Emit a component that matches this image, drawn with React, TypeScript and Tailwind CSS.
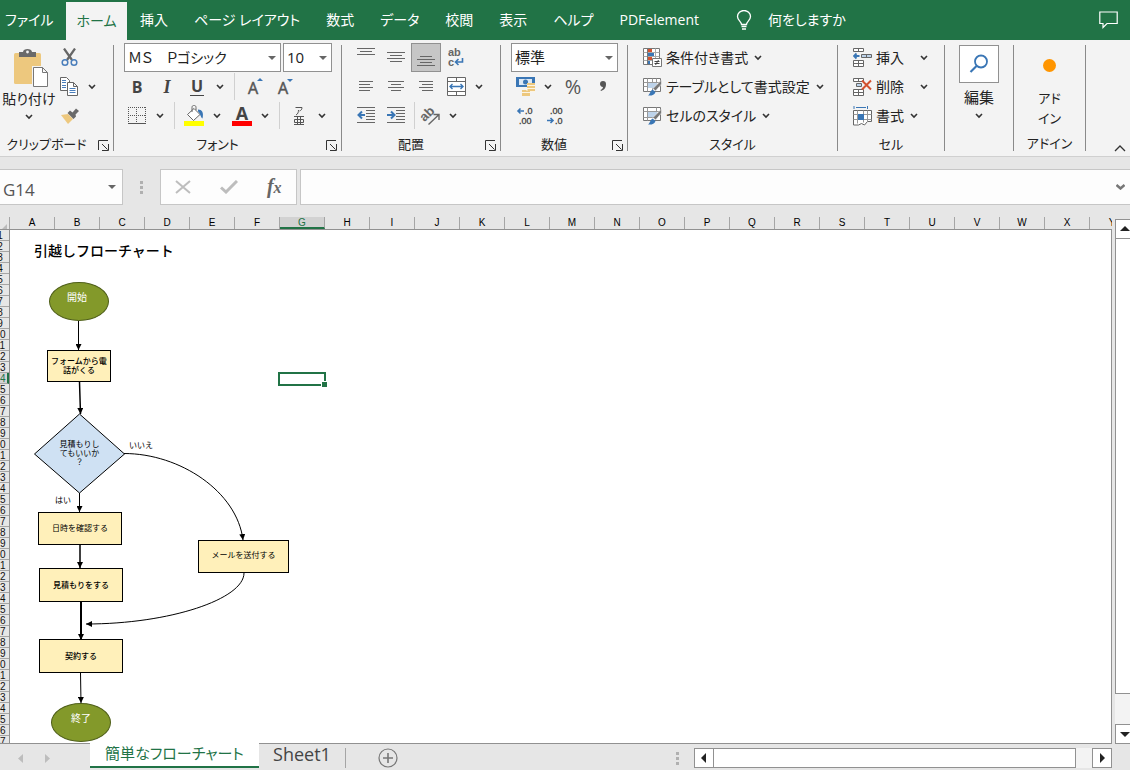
import React, { useState } from 'react';

const menuTabs = ['挿入', 'ページ レイアウト', '数式', 'データ', '校閲', '表示', 'ヘルプ', 'PDFelement'];
const columns = 'ABCDEFGHIJKLMNOPQRSTUVWXY'.split('');
const rows = Array.from({ length: 47 }, (_, i) => i + 1);

type Line = [number, number, number];

const Chevron = () => (
  <svg width="8" height="6" viewBox="0 0 8 6" fill="none" stroke="#333" strokeWidth="1.6">
    <path d="M1 1l3 3 3-3" />
  </svg>
);

const Caret = () => (
  <svg width="8" height="4" viewBox="0 0 8 4" fill="#666">
    <path d="M0 0h8l-4 4z" />
  </svg>
);

const ChevronButton = ({ label }: { label: string }) => (
  <button type="button" aria-label={label} className="flex h-[29px] w-4 items-center justify-center">
    <Chevron />
  </button>
);

const IconButton = ({ label, active = false, children }: { label: string; active?: boolean; children: React.ReactNode }) => (
  <button
    type="button"
    aria-label={label}
    className={
      active
        ? 'flex h-[29px] w-[30px] items-center justify-center border border-[#919191] bg-[#c6c6c6]'
        : 'flex h-[29px] w-[30px] items-center justify-center'
    }
  >
    {children}
  </button>
);

const Divider = () => <div className="h-[27px] w-px bg-[#d0d0d0]" />;

const DropDown = ({ label, value, className }: { label: string; value: string; className: string }) => (
  <div className={`relative ${className}`}>
    <select
      aria-label={label}
      defaultValue={value}
      className="h-[29px] w-full appearance-none border border-[#919191] bg-white pl-[3px] text-[#222]"
    >
      <option value={value}>{value}</option>
    </select>
    <div className="pointer-events-none absolute inset-y-0 right-[5px] flex items-center">
      <Caret />
    </div>
  </div>
);

const Launcher = ({ label }: { label: string }) => (
  <button type="button" aria-label={label} className="flex w-5 items-center justify-center">
    <svg width="11" height="11" viewBox="0 0 11 11" fill="none" stroke="#333">
      <path d="M.5 10V.5H10M4 4l5.5 5.5M10.5 4v6.5H4" />
    </svg>
  </button>
);

const Group = ({
  title,
  width,
  launcher = false,
  children
}: {
  title: string;
  width: string;
  launcher?: boolean;
  children?: React.ReactNode;
}) => (
  <section aria-label={title} className={`flex shrink-0 ${width}`}>
    <div className="flex min-w-0 flex-1 flex-col pt-[3px]">
      <div className="h-[87px]">{children}</div>
      <div className="mt-1 flex h-6 items-center text-[13px] text-[#222]">
        <div className="flex-1 text-center whitespace-nowrap">{title}</div>
        {launcher && <Launcher label={`${title}の設定`} />}
      </div>
    </div>
    <div className="my-[5px] w-px bg-[#8a8a8a]" />
  </section>
);

/* Horizontal strokes given as [x, y, width] */
const LinesIcon = ({ lines, children }: { lines: Line[]; children?: React.ReactNode }) => (
  <svg width="18" height="21" viewBox="0 0 18 21" fill="#666">
    {lines.map(([x, y, w], i) => (
      <rect key={i} x={x} y={y} width={w} height="1" />
    ))}
    {children}
  </svg>
);

const CommandRow = ({ icon, text, wide = false }: { icon: React.ReactNode; text: string; wide?: boolean }) => (
  <button type="button" className="flex h-[29px] items-center text-sm whitespace-nowrap text-[#222]">
    <span className="mr-1 flex w-[19px] justify-center">{icon}</span>
    {text}
    <span className={wide ? 'ml-4' : 'ml-1.5'}>
      <Chevron />
    </span>
  </button>
);

const ClipboardIcon = () => (
  <svg width="35" height="39" viewBox="0 0 35 39">
    <rect x="0" y="4" width="27" height="31" rx="1.5" fill="#edc87e" />
    <path d="M5 8V3h4c0-4 9-4 9 0h4v5z" fill="#6a6a6a" />
    <circle cx="13.5" cy="3" r="1.4" fill="#f3f3f3" />
    <path d="M19.5 18.5h9l5 5v14h-14z" fill="#fff" stroke="#f3f3f3" strokeWidth="3" />
    <path d="M19.5 18.5h9l5 5v14h-14zM28.5 18.5v5h5" fill="#fff" stroke="#777" />
  </svg>
);

const CutIcon = () => (
  <svg width="17" height="19" viewBox="0 0 17 19" fill="none">
    <path d="M3 0.5l8 11.5M14 0.5L6 12" stroke="#666" strokeWidth="2.2" />
    <circle cx="4" cy="14.5" r="2.8" stroke="#4a7ebb" strokeWidth="1.5" />
    <circle cx="13" cy="14.5" r="2.8" stroke="#4a7ebb" strokeWidth="1.5" />
  </svg>
);

const CopyIcon = () => (
  <svg width="18" height="19" viewBox="0 0 18 19" fill="#fff" stroke="#666">
    <path d="M.5 .5h6l3 3v10h-9z" />
    <path d="M2 3.5h4M2 5.5h4M2 8.5h4M2 10.5h4" stroke="#4a7ebb" />
    <path d="M7.5 5.5h6l4 4v9h-10zM13.5 5.5v4h4" />
    <path d="M9.5 11.5h6M9.5 13.5h6M9.5 15.5h6" stroke="#4a7ebb" />
  </svg>
);

const BrushIcon = () => (
  <svg width="18" height="16" viewBox="0 0 18 16">
    <path d="M0 7l7-1 5 5-5 5z" fill="#edc87e" />
    <path d="M6.5 5l2.5-2.5 2.5 2L15 .5l3 2.5-3.5 3.5.5 2-2.5 2.5z" fill="#6a6a6a" />
  </svg>
);

const BorderIcon = () => (
  <svg width="18" height="18" viewBox="0 0 18 18" fill="none" stroke="#555">
    <path d="M0 .5h18M0 8.5h18M.5 0v16M8.5 0v16M17.5 0v16" strokeDasharray="1 1" />
    <path d="M0 16.5h18" />
  </svg>
);

const FillIcon = () => (
  <svg width="20" height="21" viewBox="0 0 20 21">
    <path d="M3.5 9.5l6.5-6 6 6-6.5 6z" fill="#fff" stroke="#666" />
    <path d="M8 7V2.5c0-3 4-3 4 0V5" fill="none" stroke="#666" />
    <path d="M14 4.5c4 0 6 3 4.5 9-2-1-2-5-4.5-7z" fill="#3a76b5" />
    <path d="M0 16h20v5H0z" fill="#ff0" />
  </svg>
);

const FontSizeIcon = ({ down = false }: { down?: boolean }) => (
  <svg width="16" height="18" viewBox="0 0 16 18" className="overflow-visible">
    <text x="0" y="16" fontSize="16" fill="#555" stroke="#555" strokeWidth=".5">
      A
    </text>
    <path d={down ? 'M9 1h6l-3 3z' : 'M9 3h6l-3-3z'} fill="#3a76b5" />
  </svg>
);

const RubyIcon = () => (
  <svg width="12" height="20" viewBox="0 0 12 20" fill="none" stroke="#555">
    <path d="M2.5 1.5H9c0 2-1 3-2.5 3.5M5.5 4c0 2-.5 4-2.5 5M1 10.5h10M4.5 10.5v8M7.5 10.5v8M1.5 13.5h9v3h-9zM1 18.5h10" />
  </svg>
);

const WrapIcon = () => (
  <svg width="18" height="19" viewBox="0 0 18 19" className="overflow-visible font-['Liberation_Sans',sans-serif]">
    <text x="1" y="8" fontSize="11" fontWeight="600" fill="#666">
      ab
    </text>
    <text x="1" y="18" fontSize="11" fontWeight="600" fill="#666">
      c
    </text>
    <path d="M15.5 10v4H9M11.5 11l-3 3 3 3" fill="none" stroke="#3a76b5" strokeWidth="1.6" />
  </svg>
);

const MergeIcon = () => (
  <svg width="19" height="19" viewBox="0 0 19 19" fill="#fff" stroke="#666">
    <path d="M.5 .5h18v18H.5zM9.5 .5v4M9.5 14.5v4M.5 4.5h18M.5 14.5h18" />
    <path d="M3 9.5h13M5.5 7L3 9.5 5.5 12M13.5 7L16 9.5 13.5 12" fill="none" stroke="#3a76b5" strokeWidth="1.4" />
  </svg>
);

const OrientationIcon = () => (
  <svg width="19" height="18" viewBox="0 0 19 18" className="overflow-visible font-['Liberation_Sans',sans-serif]">
    <text x="1" y="13" fontSize="13" fontWeight="600" fill="#666" transform="rotate(-45 5 11)">
      ab
    </text>
    <path d="M7.5 17.5L17.500 8M12.5 7.5h5.500V13" fill="none" stroke="#666" strokeWidth="1.4" />
  </svg>
);

const CurrencyIcon = () => (
  <svg width="19" height="19" viewBox="0 0 19 19">
    <path d="M0 0h19v10H0z" fill="#3a76b5" />
    <path d="M3 2h13v6H3z" fill="#dce8f5" />
    <circle cx="9.5" cy="5" r="2.5" fill="#3a76b5" />
    <path d="M11 6h8v9h-5v4H6v-6h5z" fill="#edc87e" />
    <path d="M11 8.5h8M11 11.5h8M6 15.5h8M14 14.5h5M11 12v2" stroke="#fff" strokeWidth=".8" />
  </svg>
);

const DecimalIcon = ({ add = false }: { add?: boolean }) => (
  <svg
    width="18"
    height="18"
    viewBox="0 0 18 18"
    fontSize="9"
    fill="#444"
    stroke="#444"
    strokeWidth=".3"
    className="overflow-visible font-['Liberation_Sans',sans-serif]"
  >
    <text x={add ? 9 : 4} y="7">
      {add ? '.0' : '.00'}
    </text>
    <text x={add ? 3 : 9} y="17">
      {add ? '.00' : '.0'}
    </text>
    {add ? (
      <path d="M8 4H2M4.5 1.5L2 4l2.5 2.5" fill="none" stroke="#3a76b5" strokeWidth="1.6" />
    ) : (
      <path d="M1 13.5h6M4.5 11L7 13.5 4.5 16" fill="none" stroke="#3a76b5" strokeWidth="1.6" />
    )}
  </svg>
);

const ConditionalIcon = () => (
  <svg width="19" height="19" viewBox="0 0 19 19" fill="#fff" stroke="#777">
    <path d="M.5 .5h16v16H.5z" />
    <path d="M.5 4.5h16M.5 8.5h16M.5 12.5h16M12.5 .5v16" stroke="#aaa" />
    <path d="M4.5 .5v16" />
    <path d="M5 1h4v3H5zM5 9h4v3H5z" fill="#d35230" stroke="none" />
    <path d="M5 5h6v3H5zM5 13h2v3H5z" fill="#3a76b5" stroke="none" />
    <path d="M9.5 10.5h9v8h-9z" />
    <path d="M11.5 13.5h5M11.5 15.5h5M15.5 12l-3 5" stroke="#444" />
  </svg>
);

const TableStyleIcon = ({ cell = false }: { cell?: boolean }) => (
  <svg width="19" height="18" viewBox="0 0 19 18" fill="#fff" stroke="#777">
    <path d="M.5 .5h17v13H.5z" />
    {cell ? (
      <path d="M4.5 .5v13M.5 4.5h17M.5 10.5h12M13.5 .5v8" stroke="#999" />
    ) : (
      <path d="M.5 4.5h17M.5 8.5h17M4.5 .5v13M9.5 .5v13M13.5 .5v8" stroke="#999" />
    )}
    <path d="M5 5h9v5H5z" fill="#bdd3ea" stroke="none" />
    <path d="M18.5 2v4l-6 7-2.5-2.5z" fill="#777" stroke="#f3f3f3" strokeWidth=".6" />
    <path d="M9.5 11.5l3 2.500c-1 3-4 4-7.5 3.5 2-1 2-4.5 4.500-6z" fill="#3a76b5" stroke="none" />
  </svg>
);

const InsertIcon = () => (
  <svg width="19" height="19" viewBox="0 0 19 19" fill="#fff" stroke="#666">
    <path d="M.5 .5h10v3H.5zM5.5 .5v3M.5 12.5h10v6H.5zM5.5 12.5v6M.5 15.5h10" />
    <path d="M8.5 6.5h10v3h-10zM13.5 6.5v3" fill="#bdd3ea" />
    <path d="M6.5 8H1M3.5 5.5L1 8l2.5 2.5" fill="none" stroke="#3a76b5" strokeWidth="1.8" />
  </svg>
);

const DeleteIcon = () => (
  <svg width="19" height="18" viewBox="0 0 19 18" fill="#fff" stroke="#666">
    <path d="M.5 .5h10v3H.5zM5.5 .5v3M.5 11.5h10v6H.5zM5.5 11.5v6M.5 14.5h10" />
    <path d="M3.5 5.5h5v3h-5z" fill="#bdd3ea" />
    <path d="M9 2.5l9 9M18 2.5l-9 9" stroke="#d35230" strokeWidth="2" />
  </svg>
);

const FormatIcon = () => (
  <svg width="19" height="20" viewBox="0 0 19 20" fill="#fff" stroke="#666">
    <path d="M1 0v3M14.5 0v3M3 1.5h10" stroke="#3a76b5" />
    <path d="M.5 4.5h18v11h-4l-3 3.5-3-1.5-3 1.5h-5z" />
    <path d="M.5 8.5h18M.5 13.5h18M4.5 4.5v13M10.5 4.5v12M14.5 4.5v11" stroke="#999" />
    <path d="M5 8h6v6H5z" fill="#3a76b5" stroke="none" />
  </svg>
);

const Grip = () => (
  <div className="flex flex-col gap-0.5">
    <span className="size-[3px] bg-[#b0b0b0]" />
    <span className="size-[3px] bg-[#b0b0b0]" />
    <span className="size-[3px] bg-[#b0b0b0]" />
  </div>
);

const ScrollButton = ({ label, path }: { label: string; path: string }) => (
  <button type="button" aria-label={label} className="flex size-5 shrink-0 items-center justify-center border border-[#919191] bg-white">
    <svg width="10" height="10" viewBox="0 0 10 10" fill="#222">
      <path d={path} />
    </svg>
  </button>
);

const MenuBar = () => (
  <nav className="flex h-10 shrink-0 items-center bg-[#217346] text-sm whitespace-nowrap text-white">
    <button type="button" className="w-[66px] pl-[5px] text-left">ファイル</button>
    <button type="button" className="mt-0.5 h-[38px] w-[61px] bg-[#f3f3f3] text-[#217346]">ホーム</button>
    {menuTabs.map((tab) => (
      <button key={tab} type="button" className="px-[13px]">
        {tab}
      </button>
    ))}
    <button type="button" className="ml-6 flex items-center gap-4">
      <svg width="16" height="20" viewBox="0 0 16 20" fill="none" stroke="#fff" strokeWidth="1.3">
        <path d="M5.5 14.5c0-3-4-4-4-8a6.5 6 0 0 1 13 0c0 4-4 5-4 8zM5.5 16.5h5M6 19h4" />
      </svg>
      何をしますか
    </button>
    <button type="button" aria-label="コメント" className="mr-3 ml-auto">
      <svg width="19" height="18" viewBox="0 0 19 18" fill="none" stroke="#fff" strokeWidth="1.2">
        <path d="M.8 1h17.4v11.500H8l-4 4v-4H.8z" />
      </svg>
    </button>
  </nav>
);

const Ribbon = () => (
  <div className="flex h-[117px] shrink-0 border-b border-[#d0d0d0] bg-[#f3f3f3]">
    <Group title="クリップボード" width="w-[114px]" launcher>
      <div className="flex">
        <button type="button" className="flex w-[58px] flex-col items-center pt-1.5 text-sm leading-[22px] whitespace-nowrap text-[#222]">
          <span className="pl-1">
            <ClipboardIcon />
          </span>
          <span>貼り付け</span>
          <span className="pt-1">
            <Chevron />
          </span>
        </button>
        <div>
          <button type="button" aria-label="切り取り" className="flex h-[29px] w-[22px] items-center justify-center">
            <CutIcon />
          </button>
          <div className="flex">
            <button type="button" aria-label="コピー" className="flex h-[29px] w-[22px] items-center justify-center">
              <CopyIcon />
            </button>
            <div className="ml-1">
              <ChevronButton label="コピーのオプション" />
            </div>
          </div>
          <button type="button" aria-label="書式のコピー" className="flex h-[29px] w-[24px] items-center justify-center">
            <BrushIcon />
          </button>
        </div>
      </div>
    </Group>

    <Group title="フォント" width="w-[228px]" launcher>
      <div className="flex gap-0.5 pl-2.5">
        <DropDown label="フォント名" value="ＭＳ　Ｐゴシック" className="w-[157px] text-sm" />
        <DropDown label="フォント サイズ" value="10" className="w-[49px] text-[15px]" />
      </div>
      <div className="flex items-center pl-2 text-base text-[#444]">
        <IconButton label="太字"><b>B</b></IconButton>
        <IconButton label="斜体"><b className="font-['Liberation_Serif',serif] text-lg italic">I</b></IconButton>
        <IconButton label="下線"><b className="border-b border-[#444] px-px leading-[18px]">U</b></IconButton>
        <ChevronButton label="下線のオプション" />
        <div className="px-1.5">
          <Divider />
        </div>
        <IconButton label="フォント サイズの拡大"><FontSizeIcon /></IconButton>
        <IconButton label="フォント サイズの縮小"><FontSizeIcon down /></IconButton>
      </div>
      <div className="flex items-center pl-2">
        <IconButton label="罫線"><BorderIcon /></IconButton>
        <ChevronButton label="罫線のオプション" />
        <div className="pr-1 pl-1.5">
          <Divider />
        </div>
        <IconButton label="塗りつぶしの色"><FillIcon /></IconButton>
        <ChevronButton label="塗りつぶしのオプション" />
        <div className="ml-0.5 flex items-center">
          <IconButton label="フォントの色">
            <span className="w-5 border-b-[5px] border-[#f00] text-center text-lg leading-4 font-bold text-[#444]">A</span>
          </IconButton>
          <ChevronButton label="フォントの色のオプション" />
        </div>
        <div className="pr-1 pl-1.5">
          <Divider />
        </div>
        <IconButton label="ふりがな"><RubyIcon /></IconButton>
        <ChevronButton label="ふりがなのオプション" />
      </div>
    </Group>

    <Group title="配置" width="w-[159px]" launcher>
      <div className="flex pl-[9px]">
        <IconButton label="上揃え"><LinesIcon lines={[[0, 1, 18], [3, 4, 12], [0, 7, 18]]} /></IconButton>
        <IconButton label="上下中央揃え"><LinesIcon lines={[[0, 5, 18], [3, 8, 12], [0, 11, 18], [3, 14, 12]]} /></IconButton>
        <IconButton label="下揃え" active><LinesIcon lines={[[3, 9, 12], [0, 12, 18], [3, 15, 12], [0, 18, 18]]} /></IconButton>
        <IconButton label="折り返して全体を表示する"><WrapIcon /></IconButton>
      </div>
      <div className="flex pl-[9px]">
        <IconButton label="左揃え"><LinesIcon lines={[[2, 5, 14], [2, 8, 11], [2, 11, 14], [2, 14, 11]]} /></IconButton>
        <IconButton label="中央揃え"><LinesIcon lines={[[1, 5, 16], [4, 8, 10], [1, 11, 16], [4, 14, 10]]} /></IconButton>
        <IconButton label="右揃え"><LinesIcon lines={[[2, 5, 14], [5, 8, 11], [2, 11, 14], [5, 14, 11]]} /></IconButton>
        <IconButton label="セルを結合して中央揃え"><MergeIcon /></IconButton>
        <ChevronButton label="結合のオプション" />
      </div>
      <div className="flex items-center pl-[9px]">
        <IconButton label="インデントを減らす">
          <LinesIcon lines={[[0, 2, 18], [9, 5, 9], [9, 8, 9], [9, 11, 9], [9, 14, 9], [0, 17, 18]]}>
            <path d="M8 10H2M5 6.5L1.5 10 5 13.5" fill="none" stroke="#3a76b5" strokeWidth="2" />
          </LinesIcon>
        </IconButton>
        <IconButton label="インデントを増やす">
          <LinesIcon lines={[[0, 2, 18], [9, 5, 9], [9, 8, 9], [9, 11, 9], [9, 14, 9], [0, 17, 18]]}>
            <path d="M0 10h6M4 6.5L7.5 10 4 13.5" fill="none" stroke="#3a76b5" strokeWidth="2" />
          </LinesIcon>
        </IconButton>
        <div className="pl-[3px]">
          <Divider />
        </div>
        <IconButton label="方向"><OrientationIcon /></IconButton>
        <ChevronButton label="方向のオプション" />
      </div>
    </Group>

    <Group title="数値" width="w-[127px]" launcher>
      <div className="pl-2.5">
        <DropDown label="表示形式" value="標準" className="w-[107px] text-[15px]" />
      </div>
      <div className="flex pl-[9px] text-xl text-[#555]">
        <IconButton label="通貨表示形式"><CurrencyIcon /></IconButton>
        <ChevronButton label="通貨のオプション" />
        <div className="ml-0.5 flex">
          <IconButton label="パーセント スタイル">%</IconButton>
          <IconButton label="桁区切りスタイル">
            <svg width="8" height="11" viewBox="0 0 8 11" fill="#555">
              <path d="M1 3a3 3 0 0 1 6 0c0 4-2 6-5 7l-.5-1C3 8.5 4 7 4 6 2 6 1 4.500 1 3z" />
            </svg>
          </IconButton>
        </div>
      </div>
      <div className="flex pl-[9px]">
        <IconButton label="小数点以下の表示桁数を増やす"><DecimalIcon add /></IconButton>
        <IconButton label="小数点以下の表示桁数を減らす"><DecimalIcon /></IconButton>
      </div>
    </Group>

    <Group title="スタイル" width="w-[210px]">
      <div className="pl-[15px]">
        <CommandRow icon={<ConditionalIcon />} text="条件付き書式" />
        <CommandRow icon={<TableStyleIcon />} text="テーブルとして書式設定" />
        <CommandRow icon={<TableStyleIcon cell />} text="セルのスタイル" />
      </div>
    </Group>

    <Group title="セル" width="w-[107px]">
      <div className="pl-[15px]">
        <CommandRow icon={<InsertIcon />} text="挿入" wide />
        <CommandRow icon={<DeleteIcon />} text="削除" wide />
        <CommandRow icon={<FormatIcon />} text="書式" />
      </div>
    </Group>

    <Group title="" width="w-[69px]">
      <button type="button" className="flex w-full flex-col items-center pt-0.5 text-[15px] leading-7 text-[#222]">
        <span className="flex h-[38px] w-10 items-center justify-center border border-[#919191] bg-white">
          <svg width="20" height="20" viewBox="0 0 20 20" fill="none" stroke="#3a76b5">
            <circle cx="12" cy="7.5" r="6" strokeWidth="1.8" />
            <path d="M7.5 12l-6 6" strokeWidth="2.2" />
          </svg>
        </span>
        <span>編集</span>
        <span className="pt-0.5">
          <Chevron />
        </span>
      </button>
    </Group>

    <Group title="アドイン" width="w-[72px]">
      <button type="button" className="flex w-full flex-col items-center pt-4 text-[13px] leading-5 text-[#222]">
        <span className="mb-4 size-[13px] rounded-full bg-[#ff9500]" />
        <span>アド</span>
        <span>イン</span>
      </button>
    </Group>

    <button type="button" aria-label="リボンを折りたたむ" className="mt-auto mr-1 mb-1 ml-auto">
      <svg width="12" height="8" viewBox="0 0 12 8" fill="none" stroke="#333" strokeWidth="1.3">
        <path d="M1 7l5-5 5 5" />
      </svg>
    </button>
  </div>
);

const FormulaBar = ({ cell }: { cell: string }) => {
  const [formula, setFormula] = useState('');
  return (
    <div className="flex h-12 shrink-0 items-end">
      <div className="relative w-[123px]">
        <input
          aria-label="名前ボックス"
          defaultValue={cell}
          className="h-9 w-full border border-l-0 border-[#c6c6c6] bg-[#fdfdfd] pt-1 pl-[3px] text-[17px] text-[#555]"
        />
        <div className="pointer-events-none absolute inset-y-0 right-[7px] flex items-center">
          <Caret />
        </div>
      </div>
      <div className="flex h-9 w-[37px] items-center justify-center">
        <Grip />
      </div>
      <div className="flex h-9 w-[137px] items-center justify-around border border-[#c6c6c6] bg-[#fdfdfd]">
        <button type="button" aria-label="キャンセル">
          <svg width="16" height="14" viewBox="0 0 16 14" fill="none" stroke="#bdbdbd" strokeWidth="2">
            <path d="M1 1l14 12M15 1L1 13" />
          </svg>
        </button>
        <button type="button" aria-label="入力">
          <svg width="18" height="14" viewBox="0 0 18 14" fill="none" stroke="#bdbdbd" strokeWidth="3">
            <path d="M1 7.5L6 12 17 1" />
          </svg>
        </button>
        <button type="button" aria-label="関数の挿入" className="font-['Liberation_Serif',serif] text-xl leading-6 font-bold text-[#666] italic">
          f<span className="text-base">x</span>
        </button>
      </div>
      <div className="relative ml-[3px] flex-1">
        <input
          aria-label="数式バー"
          value={formula}
          onChange={(e) => setFormula(e.target.value)}
          className="h-9 w-full border border-r-0 border-[#c6c6c6] bg-[#fdfdfd] px-2 text-base"
        />
        <div className="pointer-events-none absolute inset-y-0 right-[5px] flex items-center">
          <svg width="9" height="6" viewBox="0 0 9 6" fill="none" stroke="#777" strokeWidth="2.5">
            <path d="M.5 1l4 3.5 4-3.5" />
          </svg>
        </div>
      </div>
    </div>
  );
};

const Node = ({ className, children }: { className: string; children: React.ReactNode }) => (
  <div className={`absolute flex items-center justify-center text-center whitespace-nowrap ${className}`}>{children}</div>
);

/* Shapes float over the cells, so they sit at free canvas positions */
const Flowchart = () => (
  <div className="absolute inset-0 font-['Noto_Sans_CJK_JP',sans-serif] text-[8px] leading-[9px] text-black [font-feature-settings:normal]">
    <h1 className="absolute top-[10px] left-6 text-[14px] leading-5 font-medium whitespace-nowrap">引越しフローチャート</h1>
    <svg width="300" height="514" viewBox="0 0 300 514" className="absolute top-0 left-0" fill="none" stroke="#000">
      <defs>
        <marker id="arrow" viewBox="0 0 6 6" refX="6" refY="3" markerWidth="6" markerHeight="6" markerUnits="userSpaceOnUse" orient="auto">
          <path d="M0 0l6 3-6 3z" fill="#000" stroke="none" />
        </marker>
      </defs>
      <path d="M69.5 184l45 40-45 39-45-39z" fill="#cfe1f3" />
      <path d="M68.5 91v29" markerEnd="url(#arrow)" />
      <path d="M69.5 152l1 32" strokeWidth="1.5" markerEnd="url(#arrow)" />
      <path d="M69.5 263v19" markerEnd="url(#arrow)" />
      <path d="M70 315v23" strokeWidth="1.5" markerEnd="url(#arrow)" />
      <path d="M71 372v38" strokeWidth="2" markerEnd="url(#arrow)" />
      <path d="M70.5 443l.5 30" markerEnd="url(#arrow)" />
      <path d="M114 223.5c56 0 113 38 119 86.5" markerEnd="url(#arrow)" />
      <path d="M234 343c0 26-74 51-158 51" markerEnd="url(#arrow)" />
    </svg>
    <Node className="top-[52px] left-[39px] h-[39px] w-[60px] rounded-[50%] border border-[#4f5f1a] bg-[#83992a] pr-1 pb-2.5 text-[10px] text-white">開始</Node>
    <Node className="top-[120px] left-[37px] h-8 w-16 border border-black bg-[#fff0ba] pb-0.5 font-medium">
      フォームから電
      <br />
      話がくる
    </Node>
    <Node className="top-[184px] left-6 h-[78px] w-[91px] pb-0.5">
      見積もりし
      <br />
      てもいいか
      <br />？
    </Node>
    <Node className="top-[210px] left-[119px]">いいえ</Node>
    <Node className="top-[265px] left-[45px]">はい</Node>
    <Node className="top-[282px] left-7 h-[33px] w-[84px] border border-black bg-[#fff0ba] pb-0.5">日時を確認する</Node>
    <Node className="top-[310px] left-[188px] h-[33px] w-[91px] border border-black bg-[#fff0ba] pb-1">メールを送付する</Node>
    <Node className="top-[338px] left-[29px] h-[34px] w-[84px] border border-black bg-[#fff0ba] pb-0.5 font-medium">見積もりをする</Node>
    <Node className="top-[409px] left-[29px] h-[34px] w-[84px] border border-black bg-[#fff0ba] pb-0.5 font-medium">契約する</Node>
    <Node className="top-[473px] left-[41px] h-[39px] w-[60px] rounded-[50%] border border-[#4f5f1a] bg-[#83992a] pb-2.5 text-[10px] text-white">終了</Node>
  </div>
);

const Sheet = () => (
  <div className="flex min-h-0 flex-1 flex-col overflow-hidden border-b border-[#919191]">
    <div className="flex h-[13px] shrink-0 overflow-hidden border-b border-[#919191] font-['Liberation_Sans',sans-serif] text-[10px] leading-3 text-black">
      <div className="flex w-[10px] shrink-0 items-end justify-center border-r border-[#a5a5a5]">
        <svg width="5" height="5" viewBox="0 0 5 5" fill="#bbb">
          <path d="M5 0v5H0z" />
        </svg>
      </div>
      {columns.map((name) => (
        <div
          key={name}
          className={
            name === 'G'
              ? 'w-[45px] shrink-0 border-r border-b-2 border-r-[#a5a5a5] border-b-[#217346] bg-[#d2d2d2] text-center text-[#217346]'
              : 'w-[45px] shrink-0 border-r border-[#a5a5a5] text-center'
          }
        >
          {name}
        </div>
      ))}
    </div>
    <div className="flex min-h-0 flex-1 overflow-hidden border-r border-[#919191]">
      <div className="w-[10px] shrink-0 border-r border-[#919191] font-['Liberation_Sans',sans-serif] text-[10px] leading-3 text-[#111]">
        {rows.map((n) => (
          <div
            key={n}
            className={
              n === 14
                ? 'flex h-[11px] justify-end overflow-hidden border-r-2 border-b border-r-[#217346] border-b-[#a5a5a5] bg-[#d2d2d2] text-[#217346]'
                : 'flex h-[11px] justify-end overflow-hidden border-b border-[#a5a5a5] pr-0.5'
            }
          >
            <span className="w-[14px] shrink-0 text-center">{n}</span>
          </div>
        ))}
      </div>
      <div className="relative flex-1 overflow-hidden bg-white">
        <Flowchart />
        <div className="absolute top-[142px] left-[268px] h-[14px] w-12 border-2 border-[#217346]">
          <span className="absolute -right-[3px] -bottom-[3px] size-[6px] border-t border-l border-white bg-[#217346]" />
        </div>
      </div>
    </div>
  </div>
);

const SheetTabs = () => (
  <div className="flex h-[26px] shrink-0 items-start text-[#444]">
    <div className="flex h-7 w-[90px] items-center gap-[22px] pl-[18px]">
      <svg width="5" height="9" viewBox="0 0 5 9" fill="#bdbdbd">
        <path d="M5 0v9L0 4.5z" />
      </svg>
      <svg width="5" height="9" viewBox="0 0 5 9" fill="#bdbdbd">
        <path d="M0 0v9l5-4.5z" />
      </svg>
    </div>
    <button type="button" className="-mt-px h-[25px] w-[169px] border-b-2 border-[#217346] bg-white pb-1 text-[15px] leading-[18px] whitespace-nowrap text-[#217346]">
      簡単なフローチャート
    </button>
    <button type="button" className="h-6 w-[86px] pb-1 text-lg leading-5">Sheet1</button>
    <div className="mt-1 h-5 w-px bg-[#a5a5a5]" />
    <button type="button" aria-label="新しいシート" className="mt-1 ml-8">
      <svg width="20" height="20" viewBox="0 0 20 20" fill="none" stroke="#777" strokeWidth="1.2">
        <circle cx="10" cy="10" r="9" />
        <path d="M10 5v10M5 10h10" strokeWidth="1.6" />
      </svg>
    </button>
    <div className="mt-2 ml-auto">
      <Grip />
    </div>
    <div className="mt-1 mr-[18px] ml-[15px] flex h-5 w-[37%] bg-[#f3f3f3]">
      <ScrollButton label="左へスクロール" path="M7 0v10L2 5z" />
      <div className="-ml-px flex-1 border border-[#919191] bg-white" />
      <div className="w-4" />
      <ScrollButton label="右へスクロール" path="M3 0v10l5-5z" />
    </div>
  </div>
);

const App = () => {
  return (
    <div className="flex h-screen flex-col overflow-hidden bg-[#e6e6e6] font-['Open_Sans','Noto_Sans_CJK_JP',sans-serif] [font-feature-settings:'palt']">
      <MenuBar />
      <Ribbon />
      <FormulaBar cell="G14" />
      <div className="flex min-h-0 flex-1">
        <div className="flex min-w-0 flex-1 flex-col pt-3">
          <Sheet />
        </div>
        <div className="mt-[14px] ml-[3px] flex w-[15px] shrink-0 flex-col overflow-hidden bg-[#f3f3f3]">
          <ScrollButton label="上へスクロール" path="M0 7h10L5 2z" />
          <div className="-mt-px w-5 flex-1 border border-[#919191] bg-white" />
          <div className="h-[30px]" />
          <ScrollButton label="下へスクロール" path="M0 3h10L5 8z" />
        </div>
      </div>
      <SheetTabs />
    </div>
  );
};

export default App;
